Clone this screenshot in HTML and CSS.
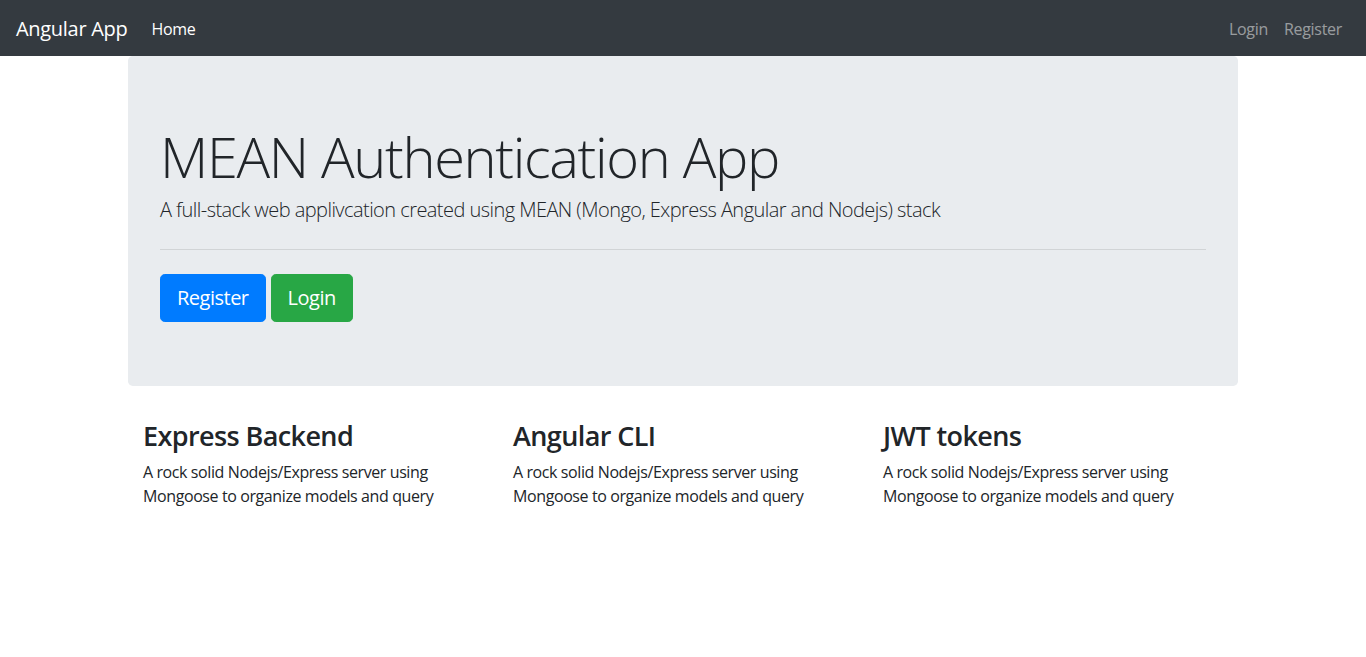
FILE: index.html
```html
<!DOCTYPE html>
<html lang="en">
<head>
<meta charset="utf-8">
<title>Angular App</title>
<link rel="stylesheet" href="styles.css">
</head>
<body>
<nav class="navbar">
  <div class="nav-left">
    <a class="brand" href="#">Angular App</a>
    <a class="nav-link active" href="#">Home</a>
  </div>
  <div class="nav-right">
    <a class="nav-link" href="#">Login</a>
    <a class="nav-link" href="#">Register</a>
  </div>
</nav>
<div class="container">
  <div class="jumbotron">
    <h1 class="display">MEAN Authentication App</h1>
    <p class="lead">A full-stack web applivcation created using MEAN (Mongo, Express Angular and Nodejs) stack</p>
    <hr class="divider">
    <div class="actions">
      <a class="btn btn-primary" href="#">Register</a>
      <a class="btn btn-success" href="#">Login</a>
    </div>
  </div>
  <div class="row">
    <div class="col">
      <h3>Express Backend</h3>
      <p>A rock solid Nodejs/Express server using Mongoose to organize models and query</p>
    </div>
    <div class="col">
      <h3>Angular CLI</h3>
      <p>A rock solid Nodejs/Express server using Mongoose to organize models and query</p>
    </div>
    <div class="col">
      <h3>JWT tokens</h3>
      <p>A rock solid Nodejs/Express server using Mongoose to organize models and query</p>
    </div>
  </div>
</div>
</body>
</html>
```
FILE: styles.css
```css
* { box-sizing: border-box; }
html, body { margin: 0; padding: 0; }
body {
  font-family: "Open Sans", "Noto Sans", sans-serif;
  font-size: 16px;
  line-height: 1.5;
  color: #212529;
  background: #fff;
}
a { text-decoration: none; }
.navbar {
  display: flex;
  justify-content: space-between;
  align-items: center;
  height: 56px;
  padding: 8px 16px;
  background: #343a40;
}
.nav-left, .nav-right { display: flex; align-items: center; }
.brand {
  color: #fff;
  font-size: 20px;
  line-height: 30px;
  margin-right: 16px;
  padding: 6px 0 4px;
  letter-spacing: -0.3px;
}
.nav-link {
  color: rgba(255,255,255,.5);
  padding: 9px 8px 7px;
  font-size: 16px;
  letter-spacing: -0.3px;
}
.nav-link.active { color: #fff; }
.container {
  width: 1140px;
  margin: 0 auto;
  padding: 0 15px;
}
.jumbotron {
  background: #e9ecef;
  border-radius: 4.8px;
  padding: 64px 32px;
  margin-bottom: 32px;
}
.display {
  font-size: 56px;
  font-weight: 300;
  line-height: 1.2;
  letter-spacing: -1.35px;
  margin: 0 0 8px;
  padding-top: 3px;
  height: 67px;
}
.lead {
  font-size: 20px;
  font-weight: 300;
  margin: 0;
  line-height: 30px;
  letter-spacing: -0.55px;
}
.divider {
  margin: 24px 0;
  border: 0;
  border-top: 1px solid rgba(0,0,0,.1);
}
.actions { display: flex; gap: 5px; }
.btn {
  display: inline-block;
  color: #fff;
  font-size: 20px;
  line-height: 30px;
  padding: 8px 16px;
  border-radius: 4.8px;
  border: 1px solid transparent;
  letter-spacing: -0.5px;
}
.btn-primary { background: #007bff; border-color: #007bff; }
.btn-success { background: #28a745; border-color: #28a745; }
.row {
  display: grid;
  grid-template-columns: repeat(3, 1fr);
}
.col { padding: 0 15px; }
.col h3 {
  font-size: 27px;
  font-weight: 600;
  line-height: 1.2;
  letter-spacing: -0.6px;
  margin: 0 0 8px;
  padding-top: 2px;
  height: 34px;
}
.col p {
  margin: 0 0 16px;
  letter-spacing: -0.4px;
}
```
